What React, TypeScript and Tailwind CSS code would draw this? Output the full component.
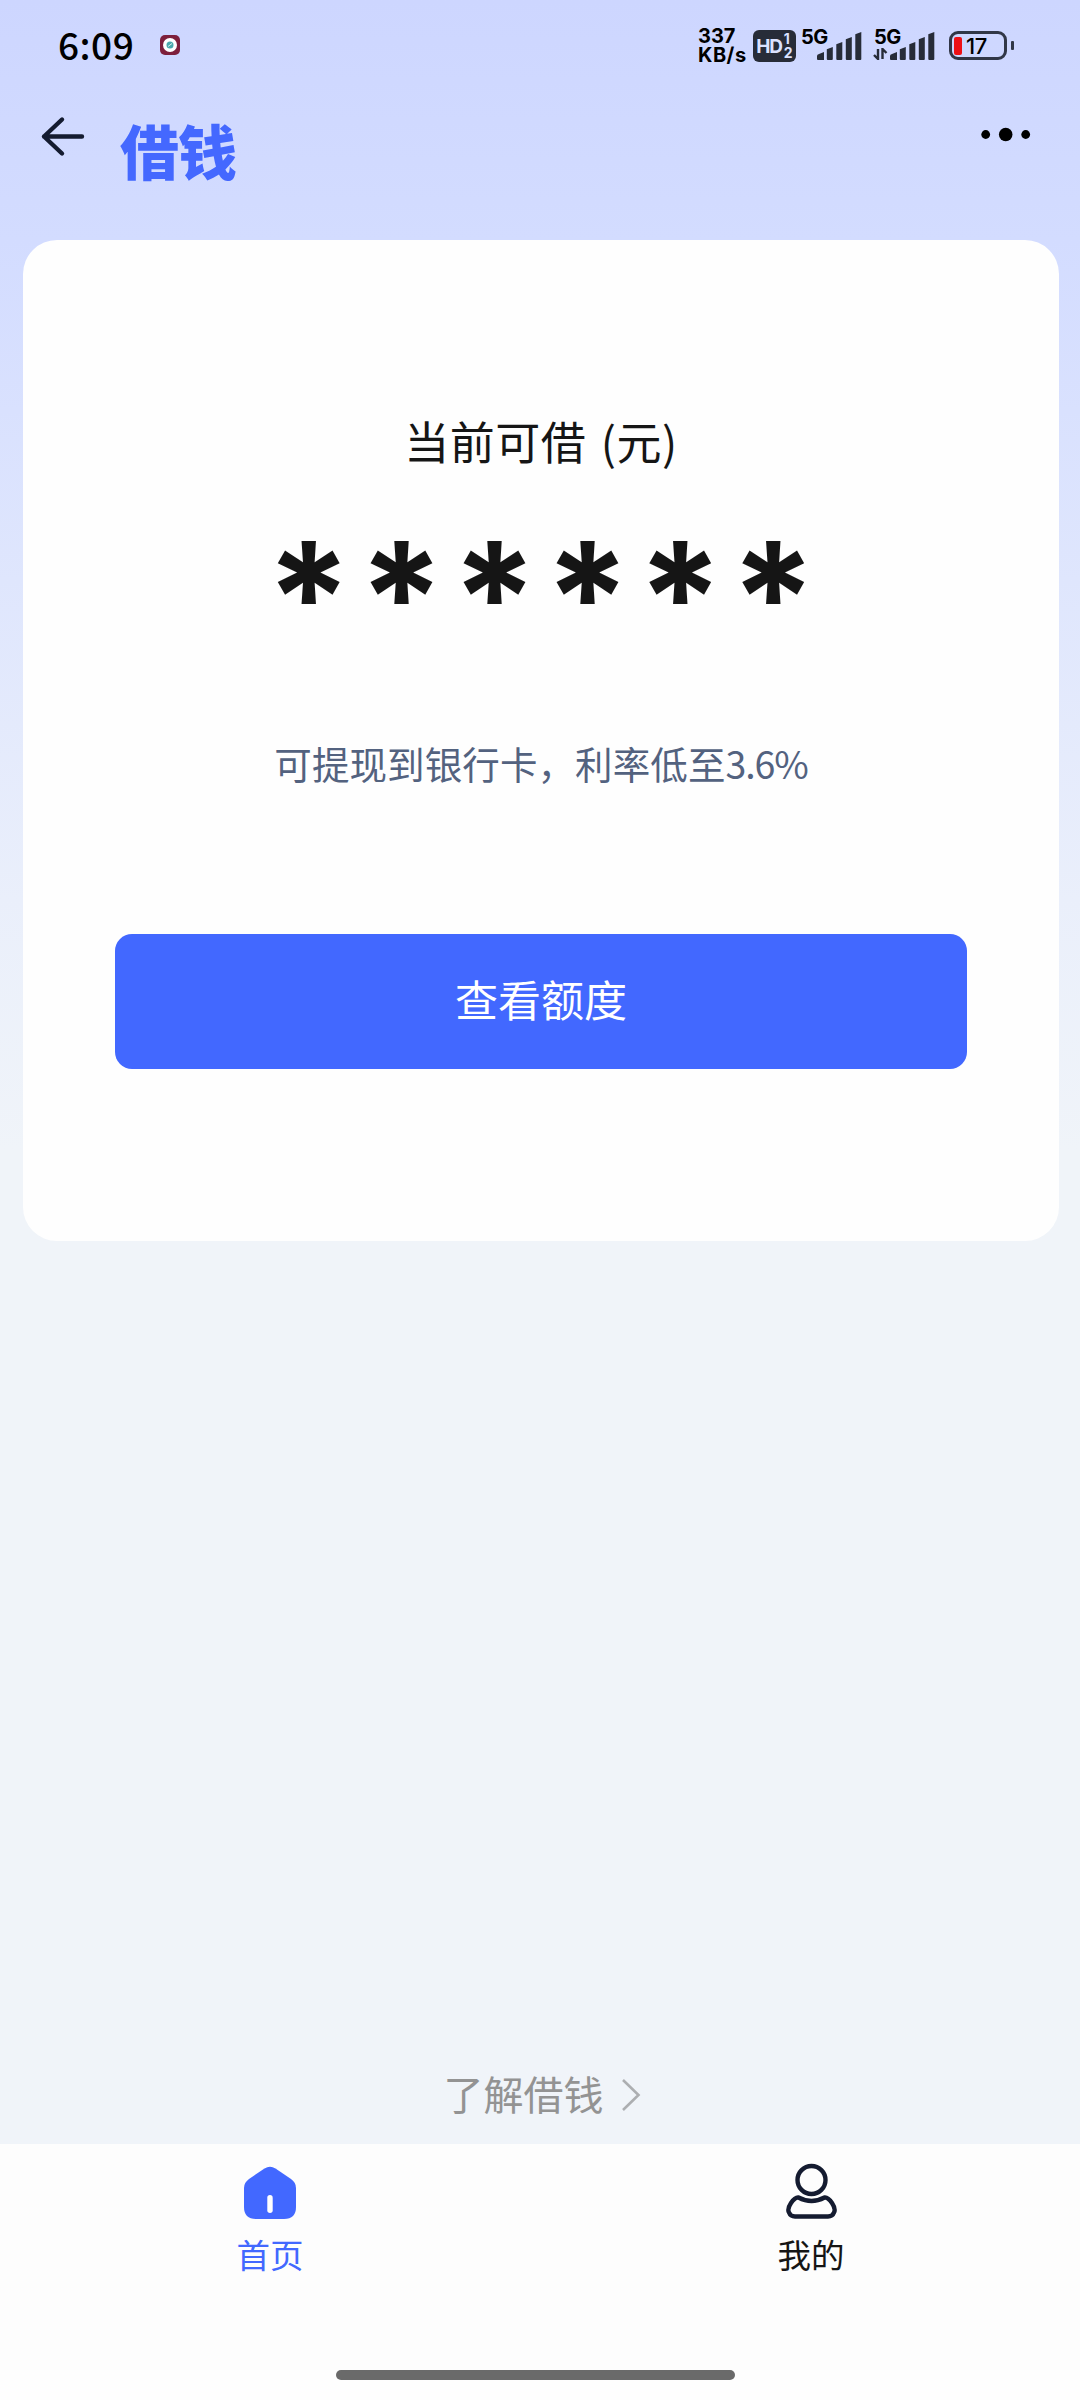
import React from 'react'

const SignalBars = () => (
    <svg width="46" height="30" viewBox="0 0 46 30" fill="#272c38">
        <path d="M1 25 Q1 23.5 3 23 L8 21 V29 H2 Q1 29 1 28Z" />
        <path d="M10.800 18.300 L16.800 16 V28 Q16.800 29 15.800 29 H11.800 Q10.800 29 10.800 28Z" />
        <path d="M20.300 13.300 L26.300 11 V28 Q26.300 29 25.300 29 H21.300 Q20.300 29 20.300 28Z" />
        <path d="M29.800 8.300 L35.800 6 V28 Q35.800 29 34.800 29 H30.800 Q29.800 29 29.800 28Z" />
        <path d="M39.300 3.300 L45.300 1 V28 Q45.300 29 44.300 29 H40.300 Q39.300 29 39.300 28Z" />
    </svg>
)

const StatusBar = () => (
    <div className="flex h-[90px] items-start pl-[58px] font-[Inter,'Noto_Sans_CJK_SC',sans-serif] text-black">
        <div className="mt-[23px] w-[102px] font-['Noto_Sans_CJK_SC',sans-serif] text-[37px] font-medium leading-[42px] tracking-[0.5px]">
            6:09
        </div>
        <svg className="mt-[35px]" width="20" height="20" viewBox="0 0 20 20">
            <rect width="20" height="20" rx="5" fill="#7d1f3c" />
            <circle cx="10" cy="10" r="7" fill="#fff" />
            <circle cx="10" cy="10" r="3.500" fill="#4aa9ad" />
            <path d="M8 11.500 L12 8.500" stroke="#d8f0ee" strokeWidth="1" />
        </svg>

        {/* network speed */}
        <div className="ml-[518px] mt-[27px] w-[55px] whitespace-nowrap text-[20px] font-bold leading-[19px]">
            <div>337</div>
            <div className="tracking-[0.5px]">KB/s</div>
        </div>

        {/* HD badge */}
        <div className="mt-[30px] flex h-8 w-[43px] items-center justify-center rounded-[6px] bg-[#272c38] text-[#dbe2ff]">
            <span className="text-[19px] font-bold leading-none tracking-[-1.2px]">HD</span>
            <span className="ml-[2px] flex flex-col text-[14px] font-bold leading-[14px]">
                <span>1</span>
                <span>2</span>
            </span>
        </div>

        {/* signals */}
        <div className="relative ml-[20px] mt-[31px]">
            <SignalBars />
            <span className="absolute left-[-15px] top-[-4px] text-[20px] font-bold leading-[20px] tracking-[-0.5px]">5G</span>
        </div>
        <div className="relative ml-[27px] mt-[31px]">
            <SignalBars />
            <span className="absolute left-[-15px] top-[-4px] text-[20px] font-bold leading-[20px] tracking-[-0.5px]">5G</span>
            <svg className="absolute left-[-16px] top-[17px]" width="15" height="12" viewBox="0 0 15 12">
                <path d="M5 1 V11 L1 7 M9.500 11 V1 L13.500 5" fill="none" stroke="#272c38" strokeWidth="2.400" />
            </svg>
        </div>

        {/* battery */}
        <div className="ml-[14px] mt-[31px] flex items-center">
            <div className="flex h-[29px] w-[58px] items-center rounded-[9px] border-[3px] border-[#313747] pl-[2px]">
                <div className="h-[18px] w-[8px] rounded-[2px] bg-[#ee1016]" />
                <span className="ml-[4px] text-[22px] font-medium leading-none tracking-[-0.3px]">17</span>
            </div>
            <div className="ml-[4px] h-[9px] w-[3px] rounded-[1px] bg-[#313747]" />
        </div>
    </div>
)

const TopBar = () => (
    <div className="flex h-[150px] items-start">
        <svg className="ml-[40px] mt-[25px]" width="46" height="44" viewBox="0 0 46 44" fill="none" stroke="#141b30" strokeWidth="4.400" strokeLinecap="round" strokeLinejoin="round">
            <path d="M22 4.500 L4 21.500 L22 38.500 M4 21.500 H42" />
        </svg>
        <h1 className="ml-[34px] mt-[30px] text-[59px] font-black leading-[60px] tracking-[-1px] text-[#4468ff]">借钱</h1>
        <svg className="ml-auto mr-[48px] mt-[36px]" width="52" height="16" viewBox="0 0 52 16">
            <circle cx="5.700" cy="8.500" r="4.400" />
            <circle cx="25.700" cy="8.500" r="6.800" />
            <circle cx="45.700" cy="8.500" r="4.400" />
        </svg>
    </div>
)

const page = () => {
    return (
        <div className="flex h-[2400px] w-[1080px] flex-col overflow-hidden bg-[linear-gradient(180deg,#cdd6ff_0px,#d3dcff_240px,#dfe6fd_580px,#eaeffb_900px,#f0f4f9_1150px)] font-['Noto_Sans_CJK_SC',sans-serif]">
            <StatusBar />
            <TopBar />

            {/* Loan card */}
            <section className="ml-[23px] flex h-[1001px] w-[1036px] flex-col items-center rounded-[34px] bg-[#fefefe]">
                <h2 className="mt-[171px] text-[45px] leading-[60px] tracking-[0.5px] [word-spacing:4px] text-[#151515]">当前可借 (元)</h2>
                <div className="mt-[62px] flex h-[80px] font-[Inter,sans-serif] text-[154px] font-bold leading-[128px] text-[#151515]">
                    {[0, 1, 2, 3, 4, 5].map((i) => (
                        <span key={i} className="flex w-[92.900px] justify-center">*</span>
                    ))}
                </div>
                <p className="mt-[125px] whitespace-nowrap text-[37.500px] leading-[50px] tracking-[0.1px] text-[#53627f]">
                    可提现到银行卡，利率低至<span className="tracking-[-1.100px]">3.6%</span>
                </p>
                <button className="mt-[146px] h-[135px] w-[852px] rounded-[17px] bg-[#4268ff] pb-[7px] text-[43px] leading-none text-white">
                    查看额度
                </button>
            </section>

            <div className="mt-auto flex h-[100px] items-center justify-center pb-[3px] pl-[5px] text-[40px] text-[#939393]">
                <span>了解借钱</span>
                <svg className="ml-[16px] mt-[4px]" width="22" height="34" viewBox="0 0 22 34" fill="none" stroke="#acaeb1" strokeWidth="2.600">
                    <path d="M3 2 L18.500 17 L3 32" />
                </svg>
            </div>

            {/* Tabs */}
            <nav className="grid h-[226px] grid-cols-2 bg-[#fdfdfd]">
                <div className="flex flex-col items-center text-[#4268ff]">
                    <svg className="mt-[22px]" width="54" height="54" viewBox="0 0 54 54">
                        <path d="M21.500 2.500 Q27 -0.800 32.500 2.500 L48 13 Q53 16.500 53 22 V41 Q53 53 41 53 H13 Q1 53 1 41 V22 Q1 16.500 6 13Z" fill="#4268ff" />
                        <rect x="24.300" y="29" width="5.400" height="18" rx="2.700" fill="#fff" />
                    </svg>
                    <span className="mt-[14px] text-[33.500px] leading-[40px]">首页</span>
                </div>
                <div className="flex flex-col items-center pl-[2px] text-[#151515]">
                    <svg className="mt-[19px]" width="54" height="58" viewBox="0 0 54 58" fill="none" stroke="#141b30" strokeWidth="4.400" strokeLinejoin="round">
                        <circle cx="27.500" cy="17" r="14" />
                        <path d="M14.500 34.500 Q27.500 41.500 40.500 34.500 Q44 34 48 40 Q52 46 50 49.500 Q48.500 53.500 44 53.500 H11 Q6.500 53.500 5 49.500 Q3 46 7 40 Q11 34 14.500 34.500Z" />
                    </svg>
                    <span className="mt-[13px] text-[33.500px] leading-[40px]">我的</span>
                </div>
            </nav>
            <div className="flex h-[30px] shrink-0 justify-center bg-[#fefefe] pr-[9px]">
                <div className="h-[10px] w-[399px] rounded-full bg-[#6a6a6a]" />
            </div>
        </div>
    )
}

export default page
